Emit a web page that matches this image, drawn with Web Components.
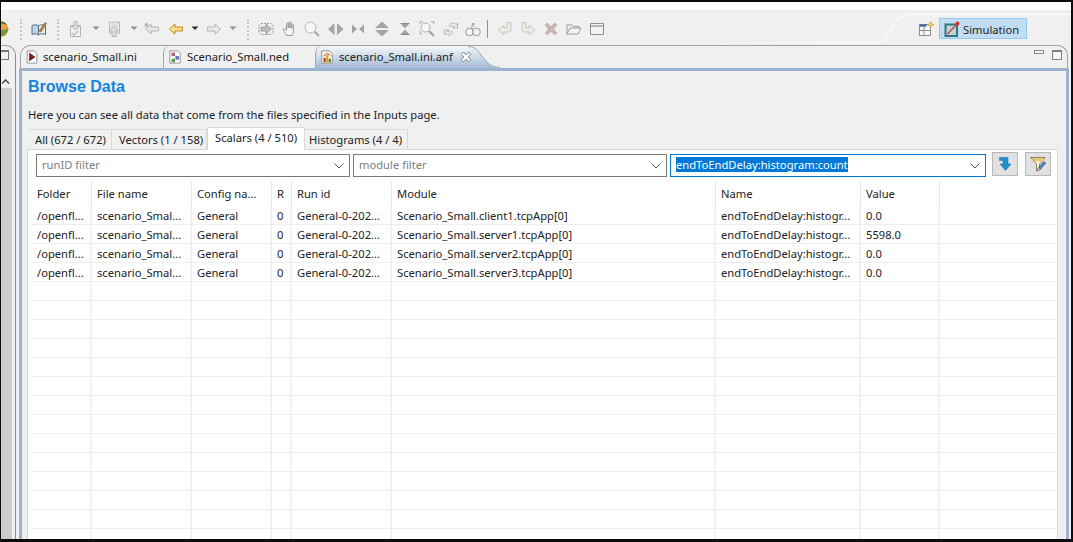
<!DOCTYPE html>
<html><head><meta charset="utf-8"><title>Browse Data</title>
<style>html,body{margin:0;padding:0;background:#000}</style></head>
<body>
<x-app></x-app>
<script>
const FONT='"Noto Sans","Open Sans",sans-serif';
const FS='11.2px';
const G='#b4b4b4';
const arrowL=(f,s)=>`<path d="M1.500 8 7 3v3h7.500v4H7v3z" fill="${f}" stroke="${s}"/>`;
const arrowR=(f,s)=>`<path d="M14.500 8 9 3v3H1.500v4H9v3z" fill="${f}" stroke="${s}"/>`;
const ICONS={
 ball:`<circle cx="0" cy="8" r="7.500" fill="#e9a33f"/><path d="M-7 7C-2 10 3 10 7.400 7 7 12 3 15.500 0 15.500S-7 12-7 7z" fill="#6a9a3a"/><path d="M0 .5C3 .5 5 2 6 4 3 2.500 1 2.500 0 2.500z" fill="#3f7a3a"/>`,
 book:`<path d="M1 4.500c2-1 4-1 6.500.3v9C5 12.500 3 12.500 1 13.500z" fill="#b9d3ea" stroke="#5a6d80"/><path d="M14.500 4.500c-2-1-4.500-1-7 .3v9c2.500-1.300 5-1.300 7-.3z" fill="#e8eef4" stroke="#5a6d80"/><path d="M8 10 14 1.500l1.500 1L10 11z" fill="#b8893f" stroke="#7a5520" stroke-width=".6"/>`,
 imp:`<path d="M2.500 4.500h10v11h-10z" fill="#f1f1f1" stroke="${G}"/><path d="M6 .5h3V5h2.500L7.500 9 3.500 5H6z" fill="#e0e0d8" stroke="${G}"/><path d="M4 12l2 2 4-4" fill="none" stroke="#b9c6a8" stroke-width="1.500"/>`,
 exp:`<path d="M3.500 1h10v11h-10z" fill="#f1f1f1" stroke="${G}"/><path d="M5 3h7M5 5h7M5 7h7" stroke="#cfcfcf"/><path d="M6 15.500h4V10h2.500L8 5.500 3.500 10H6z" fill="#e0e0d8" stroke="${G}"/>`,
 backg:`<circle cx="2.500" cy="4" r="2" fill="#b9b9b9"/>`+arrowL('#e4e8e0',G),
 backy:arrowL('#fbdf8c','#c08c24'),
 fwdg:arrowR('#ececec',G),
 car:`<path d="M.5 5.500h7l-3.500 3.500z" fill="#8f8f8f"/>`,
 cark:`<path d="M.5 5.500h7l-3.500 3.500z" fill="#2a2a2a"/>`,
 gear:`<path d="M3 2.500h10l2 2v7l-2 2H3l-2-2v-7z" fill="none" stroke="#9a9a9a" stroke-dasharray="2 1"/><path d="M3 6h5V3L13.500 8 8 13v-3H3z" fill="#bdbdbd" stroke="#8c8c8c" stroke-width=".7"/>`,
 hand:`<path d="M4.500 14.500 1.500 9c-.6-1.300 1-2 1.800-1L4.500 9.500V3.300c0-1.200 1.700-1.200 1.700 0V7V1.800c0-1.200 1.800-1.200 1.800 0V7V2.500c0-1.200 1.700-1.200 1.700 0V7.500V4.500c0-1.200 1.700-1.200 1.700 0V11l-1 3.500z" fill="#f6f6f6" stroke="#9a9a9a"/>`,
 mag:`<circle cx="6.500" cy="6.500" r="5.500" fill="#f7f7f7" stroke="#b5b5b5"/><path d="M10.500 10.500 15 15" stroke="#a8a8a8" stroke-width="2.200"/>`,
 lr:`<path d="M7.500 2v12L1 8zM10 2v12l6.500-6z" fill="#a3a3a3"/>`,
 inlr:`<path d="M2 3.500v9L7 8zM14 3.500v9L9 8z" fill="#a3a3a3"/>`,
 ud:`<path d="M1 7h14L8 .5zM1 9h14L8 15.500z" fill="#a3a3a3"/>`,
 hour:`<path d="M3.500 2.500h9L8 7.500zM3.500 13.500h9L8 8.500z" fill="#a3a3a3"/><path d="M3.500 2.500h9M3.500 13.500h9" stroke="#8a8a8a"/>`,
 zfit:`<circle cx="6.500" cy="6.500" r="4.500" fill="#f7f7f7" stroke="#b0b0b0"/><path d="M10 10l5 5" stroke="#a3a3a3" stroke-width="2.200"/><path d="M1 3V.8h3M12 .8h3V3M1 10v3h2" fill="none" stroke="#a8a8a8"/>`,
 sync:`<path d="M6 4.500c2-3 5-3 7-1l1.500-1v4.500H10l1.500-1.300C10 4.500 8.500 4.500 7.500 6z" fill="#f0f0f0" stroke="#a3a3a3" stroke-width=".8"/><path d="M10 11.500c-2 3-5 3-7 1l-1.500 1V9H6l-1.500 1.300C6 11.500 7.500 11.500 8.500 10z" fill="#f0f0f0" stroke="#a3a3a3" stroke-width=".8"/>`,
 bino:`<circle cx="4.500" cy="11" r="3.800" fill="#f4f4f4" stroke="#969696"/><circle cx="11.500" cy="11" r="3.800" fill="#f4f4f4" stroke="#969696"/><path d="M6 8 7 2h2.500L9.500 8z" fill="#a9a9a9"/><path d="M9 4 7.500 7 10 6 8.500 9" stroke="#f4f4f4" fill="none"/>`,
 retL:`<path d="M14 1.500v6.500c0 2-1 3-3 3H7v3L1 9l6-4.500V7h3V1.500z" fill="#ecebe4" stroke="#c5c5bb"/>`,
 retR:`<path d="M2 1.500v6.500c0 2 1 3 3 3h4v3l6-5-6-4.500V7H6V1.500z" fill="#ecebe4" stroke="#c5c5bb"/>`,
 del:`<path d="M2 4l2-2 4 3.500L12 2l2 2-3.500 4 3.500 4-2 2-4-3.500L4 14l-2-2 3.500-4z" fill="#c9b3b3" stroke="#b8a9a9" stroke-width=".6"/>`,
 fold:`<path d="M1 13V4h5l1.500 1.500H13V7" fill="#f2f2f2" stroke="#9a9a9a"/><path d="M1 13 4 7h11l-3 6z" fill="#f4f4f4" stroke="#9a9a9a"/>`,
 win:`<path d="M1.500 2.500h13v11h-13z" fill="#f4f4f4" stroke="#8e8e8e"/><path d="M1.500 5h13" stroke="#8e8e8e" stroke-width="1.200"/>`,
 newp:`<path d="M1.500 3.500h11v11h-11z" fill="#f8f8f8" stroke="#8e8e8e"/><path d="M1.500 4.500h7" stroke="#3a6ea5" stroke-width="2.400"/><path d="M6 5v9.500M1.500 9.500h11" stroke="#8e8e8e"/><path d="M12.500.5l1 2.300 2.300 1-2.300 1-1 2.300-1-2.300-2.300-1 2.300-1z" fill="#f5d36b" stroke="#a88a28" stroke-width=".5"/>`,
 sim:`<path d="M1.500 3.500h11.500v11.500H1.500z" fill="#c2d4d6" stroke="#2d7a82" stroke-width="2"/><path d="M3.500 13 13.500 2.500" stroke="#d83a2a" stroke-width="1.300"/><circle cx="13.500" cy="2.500" r="2" fill="#d8301f"/>`,
 fini:`<path d="M2.500 1h8l3 3v11h-11z" fill="#fff" stroke="#8b8b8b"/><path d="M5 3.500 11.500 8 5 12.500z" fill="#7a1616" stroke="#4a0e0e" stroke-width=".5"/>`,
 fned:`<path d="M2 1h9l3 3v11H2z" fill="#fff" stroke="#8b8b8b"/><path d="M4 3h4v4H4z" fill="#a66"/><path d="M8.500 7h4v4h-4z" fill="#5570c0"/><path d="M4 10h4v4H4z" fill="#5a9a4a"/>`,
 fanf:`<path d="M2 1h9l3 3v11H2z" fill="#fbf6e4" stroke="#8b8b8b"/><path d="M4 9h2.500v5H4z" fill="#c23a2a"/><path d="M7 6h2.500v8H7z" fill="#d8a02a"/><path d="M10 10h2.500v4H10z" fill="#3a8a3a"/><path d="M4 7l4-3 4 2" fill="none" stroke="#c23a2a"/>`,
 close:`<path d="M3 1.500 6 4.500 9 1.500 11.500 4 8.500 7 11.500 10 9 12.500 6 9.500 3 12.500.5 10 3.500 7 .5 4z" transform="translate(2 1)" fill="#fff" stroke="#6f6f6f"/>`,
 down:`<path d="M2.500 1.500h8.500V8h3L8.500 14.500 3 8h3V4.500H2.500z" fill="#1f8fd0" stroke="#1a78b4" stroke-width=".6"/>`,
 filt:`<path d="M.5 1.500h15L9.500 8v5.500l-3 1.500V8z" fill="#fdf6d8" stroke="#8c8460"/><path d="M1.500 2h13l-2.500 3.500H4.500z" fill="#e6cc72"/><path d="M7.500 15l.8-3 5.500-6.500 2 1.500L10.300 13.500z" fill="#4f86b8" stroke="#2a4f72" stroke-width=".6"/><path d="M7.500 15l.8-3 2 1.500z" fill="#fff" stroke="#a34040" stroke-width=".5"/>`
};
class XIcon extends HTMLElement{
 connectedCallback(){
  const w=+(this.getAttribute('w')||0),s=+(this.getAttribute('size')||16);
  const vw=w||16,pw=w||s,ph=w?16:s;
  const r=this.shadowRoot||this.attachShadow({mode:'open'});
  r.innerHTML=`<style>:host{display:inline-flex;width:${pw}px;height:${ph}px;flex:none}svg{display:block;overflow:hidden}</style><svg width="${pw}" height="${ph}" viewBox="0 0 ${vw} 16">${ICONS[this.getAttribute('name')]||''}</svg>`;
 }
}
customElements.define('x-icon',XIcon);

class XToolbar extends HTMLElement{
 constructor(){super();
  const items=[['ball',1,8],['sep',20,3],['book',30.5,16],['sep',57,3],['imp',68,16],['car',91.5,8],['exp',106,16],['car',129.5,8],['backg',144,16],['backy',168,16],['cark',190.5,8],['fwdg',206,16],['car',228.5,8],['sep',247,3],['gear',258,16],['hand',282,16],['mag',304,16],['lr',327,17],['inlr',350,16],['ud',374,16],['hour',397,16],['zfit',419,16],['sync',443,16],['bino',465,16],['bar',487,1],['retL',497,16],['retR',520,16],['del',543,16],['fold',566,16],['win',589,16]];
  let cur=1,h='';
  for(const [n,x,w] of items){
   const m=x-cur;cur=x+w;
   if(n==='sep')h+=`<i class="sep" style="margin-left:${m}px"></i>`;
   else if(n==='bar')h+=`<i class="bar" style="margin-left:${m}px"></i>`;
   else h+=`<x-icon name="${n}" w="${w}" style="margin-left:${m}px"></x-icon>`;
  }
  this.attachShadow({mode:'open'}).innerHTML=`<style>
  :host{display:flex;position:relative;height:35px;background:#f0f0f0;align-items:center;padding-top:3px;box-sizing:border-box;overflow:hidden}
  .sep{display:block;width:0;height:21px;border-left:2px dotted #c4c4c4;margin-right:1px}
  .bar{display:block;width:1px;height:18px;background:#8f8f8f}
  .sw{margin-left:auto;display:flex;align-items:center;margin-right:44px;margin-top:-1px}
  .btn{display:flex;align-items:center;width:88px;height:21px;box-sizing:border-box;margin-left:5px;background:#c2dcf3;border:1px solid #90c8f6;padding:1px 0 0 4px;font:${FS} ${FONT};color:#222;gap:3px}
  .curve{position:absolute;left:0;top:0;pointer-events:none}
  </style>
  <svg class="curve" width="1070" height="35"><defs><linearGradient id="f"><stop offset="0" stop-color="#fff" stop-opacity="0"/><stop offset=".3" stop-color="#fff"/></linearGradient></defs><path d="M720 32.500H874C892 32.500 888 4.500 910 4.500H1070" fill="none" stroke="url(#f)" stroke-width="1"/></svg>
  ${h}
  <div class="sw"><x-icon name="newp"></x-icon><div class="btn"><x-icon name="sim"></x-icon><span>Simulation</span></div></div>`;
 }
}
customElements.define('x-toolbar',XToolbar);

class XSideView extends HTMLElement{
 constructor(){super();
  this.attachShadow({mode:'open'}).innerHTML=`<style>
  :host{display:flex;flex-direction:column;width:14px;flex:none;border-right:1px solid #8f8f8f;border-top:1px solid #a0a0a0;border-top-right-radius:10px;background:#f0f0f0;overflow:hidden}
  .head{height:22px}
  .r{display:block;width:8px;height:10px;border:1px solid #777;border-left:none;box-sizing:border-box;margin-top:4px;border-top-width:2px}
  .line{height:3px}
  .up{height:17px;padding-left:0}
  .thumb{flex:1;width:11px;background:#cdcdcd}
  svg{display:block}
  </style><div class="head"><span class="r"></span></div><div class="line"></div>
  <div class="up"><svg width="11" height="17"><path d="M1 12.500 4.500 9 8 12.500" fill="none" stroke="#444" stroke-width="1.400"/></svg></div><div class="thumb"></div>`;
 }
}
customElements.define('x-side-view',XSideView);

class XEditorTab extends HTMLElement{
 constructor(){super();
  this.attachShadow({mode:'open'}).innerHTML=`<style>
  :host{display:flex;align-items:center;box-sizing:border-box;height:22px;flex:none;font:${FS} ${FONT};color:#222;position:relative;white-space:nowrap;padding:0 0 1px 4px}
  :host(:not([first])){border-left:1px solid #a8a8a8;border-top-left-radius:7px}
  :host([active]){background:linear-gradient(#f6f9fc,#a4bad5)}
  </style><slot></slot>`;
 }
}
customElements.define('x-editor-tab',XEditorTab);

class XSubTabs extends HTMLElement{
 constructor(){super();
  const t=[['All (672 / 672)',83,6],['Vectors (1 / 158)',95,7],['Scalars (4 / 510)',98,7],['Histograms (4 / 4)',103,4]];
  this.attachShadow({mode:'open'}).innerHTML=`<style>
  :host{display:flex;align-items:flex-end;height:23px;margin-left:2px;font:${FS} ${FONT};color:#222;position:relative;z-index:1;margin-bottom:-1px}
  .t{box-sizing:border-box;height:20px;background:#f0f0f0;border:1px solid #d9d9d9;border-left:none;border-bottom:none;display:flex;align-items:center;white-space:nowrap;padding-bottom:1px;margin-bottom:1px}
  .t:first-child{border-left:1px solid #d9d9d9}
  .t.on{height:23px;background:#fff;margin-bottom:0;padding-bottom:3px;border-left:1px solid #d9d9d9}
  </style>`+t.map(([s,w,p],i)=>`<div class="t${i==2?' on':''}" style="width:${w}px;padding-left:${p}px">${s}</div>`).join('');
 }
}
customElements.define('x-sub-tabs',XSubTabs);

class XCombo extends HTMLElement{
 constructor(){super();
  const sel=this.hasAttribute('selected');
  this.attachShadow({mode:'open'}).innerHTML=`<style>
  :host{display:flex;align-items:center;box-sizing:border-box;height:23px;border:1px solid ${sel?'#0078d7':'#7a7a7a'};background:#fff;padding:0 0 2px 5px;font:${FS} ${FONT};color:${sel?'#222':'#7d7d7d'};white-space:nowrap}
  .v{flex:1}
  .s{background:#0078d7;color:#fff;display:inline-block;line-height:15px}
  svg{margin:2px 5px 0 0}
  </style><div class="v">${sel?'<span class="s"><slot></slot></span>':'<slot></slot>'}</div><svg width="10" height="6"><path d="M.5.5 5 5 9.500.5" fill="none" stroke="#555"/></svg>`;
 }
}
customElements.define('x-combo',XCombo);

class XIconBtn extends HTMLElement{
 constructor(){super();
  this.attachShadow({mode:'open'}).innerHTML=`<style>:host{display:flex;align-items:center;justify-content:center;box-sizing:border-box;width:26px;height:24px;background:#e1e1e1;border:1px solid #b8b8b8;flex:none}</style><slot></slot>`;
 }
}
customElements.define('x-icon-btn',XIconBtn);

class XTable extends HTMLElement{
 constructor(){super();
  const cols='61px 100px 80px 20px 100px 324px 145px 79px 116px';
  const heads=['Folder','File name','Config na...','R','Run id','Module','Name','Value',''];
  const mods=['client1','server1','server2','server3'],vals=['0.0','5598.0','0.0','0.0'];
  let rows='';
  for(let i=0;i<18;i++){
   const d=i<4?['/openfl...','scenario_Smal...','General','0','General-0-202...',`Scenario_Small.${mods[i]}.tcpApp[0]`,'endToEndDelay:histogr...',vals[i],'']:Array(9).fill('');
   rows+=`<div class="row">${d.map((c,j)=>`<div class="c${j==8?' l':''}">${c}</div>`).join('')}</div>`;
  }
  this.attachShadow({mode:'open'}).innerHTML=`<style>
  :host{display:block;flex:1;margin:5px 1px 0 3px;font:${FS} ${FONT};color:#222;overflow:hidden;min-height:0}
  .row,.head{display:grid;grid-template-columns:${cols}}
  .head{height:24px}
  .head div{box-sizing:border-box;padding-left:5px;display:flex;align-items:center;height:24px;padding-bottom:2px;border-right:1px solid #e6e6e6;white-space:nowrap}
  .head div:first-child,.c:first-child{padding-left:6px}
  .head div:last-child{border:none}
  .row{height:19px;box-sizing:border-box;border-bottom:1px solid #efefef}
  .c{box-sizing:border-box;padding-left:5px;height:19px;line-height:19px;border-right:2px solid #f0f1f6;white-space:nowrap;overflow:hidden;margin-bottom:-1px}
  .c.l{border:none}
  </style><div class="head">${heads.map(h=>`<div>${h}</div>`).join('')}</div>${rows}`;
 }
}
customElements.define('x-table',XTable);

class XBrowsePage extends HTMLElement{
 constructor(){super();
  this.attachShadow({mode:'open'}).innerHTML=`<style>
  :host{display:flex;flex-direction:column;flex:1;min-height:0;background:#f0f0f0;padding:0 8px 0 5px;font:${FS} ${FONT};color:#222;overflow:hidden}
  h1{margin:0 0 0 1px;font:bold 16px "Liberation Sans",sans-serif;color:#1584dc;height:30px;line-height:32px}
  p{margin:0;height:26px;line-height:28px;margin-left:1px;white-space:nowrap}
  .panel{flex:1;min-height:0;background:#fff;border:1px solid #d9d9d9;border-bottom:none;display:flex;flex-direction:column}
  .filters{display:flex;padding:2px 0 0 8px;align-items:flex-start;gap:3px;height:25px}
  .filters x-combo{margin-top:2px}
  .filters x-icon-btn:first-of-type{margin-left:3px}
  .filters x-icon-btn:last-of-type{margin-left:4px}
  </style>
  <h1>Browse Data</h1>
  <p>Here you can see all data that come from the files specified in the Inputs page.</p>
  <x-sub-tabs></x-sub-tabs>
  <div class="panel">
   <div class="filters">
    <x-combo style="width:314px">runID filter</x-combo>
    <x-combo style="width:314px">module filter</x-combo>
    <x-combo selected style="width:316px">endToEndDelay:histogram:count</x-combo>
    <x-icon-btn><x-icon name="down"></x-icon></x-icon-btn>
    <x-icon-btn><x-icon name="filt"></x-icon></x-icon-btn>
   </div>
   <x-table></x-table>
  </div>`;
 }
}
customElements.define('x-browse-page',XBrowsePage);

class XEditor extends HTMLElement{
 constructor(){super();
  this.attachShadow({mode:'open'}).innerHTML=`<style>
  :host{display:flex;flex-direction:column;flex:1;min-width:0;margin:0 2px 0 3px}
  .tabs{display:flex;height:23px;box-sizing:border-box;border:1px solid #a0a0a0;border-bottom:none;border-radius:10px 10px 0 0;background:#f0f0f0;margin:0 1px;position:relative}
  .tail{flex:none;display:block}
  .cl{margin-left:auto;margin-right:-5px;position:relative;z-index:1}
  .min{position:absolute;right:23px;top:4px;width:10px;height:4px;border:1px solid #8a8a8a;box-sizing:border-box;background:#f6f6f6}
  .max{position:absolute;right:5px;top:4px;width:10px;height:10px;border:1px solid #7f7f7f;border-top-width:2px;box-sizing:border-box;background:#f6f6f6}
  .body{flex:1;min-height:0;display:flex;border:solid #9cb4d0;border-width:3px 3px 0 3px}
  </style>
  <div class="tabs">
   <x-editor-tab first style="width:142px"><x-icon name="fini" size="14"></x-icon><span style="margin-left:4px">scenario_Small.ini</span></x-editor-tab>
   <x-editor-tab style="width:152px"><x-icon name="fned" size="14"></x-icon><span style="margin-left:5px">Scenario_Small.ned</span></x-editor-tab>
   <x-editor-tab active style="width:153px"><x-icon name="fanf" size="14"></x-icon><span style="margin-left:5px">scenario_Small.ini.anf</span><x-icon class="cl" name="close" size="14"></x-icon></x-editor-tab>
   <svg class="tail" width="32" height="22"><defs><linearGradient id="g" x2="0" y2="1"><stop offset="0" stop-color="#f6f9fc"/><stop offset="1" stop-color="#a4bad5"/></linearGradient></defs><path d="M0 0H1C14 0 14 22 32 22H0z" fill="url(#g)"/><path d="M0 .5H1C14 .5 14 21.500 32 21.500" fill="none" stroke="#9aa9ba"/></svg>
   <i class="min"></i><i class="max"></i>
  </div>
  <div class="body"><x-browse-page></x-browse-page></div>`;
 }
}
customElements.define('x-editor',XEditor);

class XApp extends HTMLElement{
 constructor(){super();
  this.attachShadow({mode:'open'}).innerHTML=`<style>
  :host{display:flex;flex-direction:column;width:1073px;height:542px;box-sizing:border-box;border:solid #0c0c0c;border-width:2px 2px 3px 1px;background:#f0f0f0;overflow:hidden}
  .white{height:8px;background:#fff;flex:none}
  .main{flex:1;min-height:0;display:flex}
  </style><div class="white"></div><x-toolbar></x-toolbar><div class="main"><x-side-view></x-side-view><x-editor></x-editor></div>`;
 }
}
customElements.define('x-app',XApp);
</script>
</body></html>
